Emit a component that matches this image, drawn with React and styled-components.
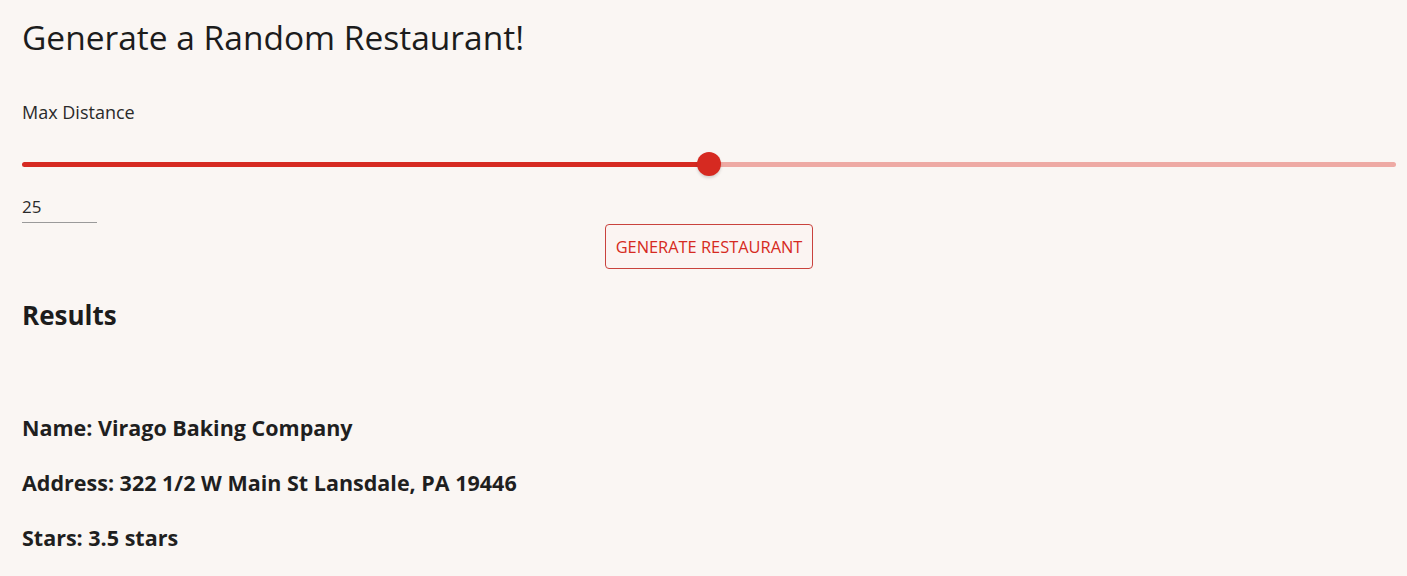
import React, { useState } from "react";
import styled, { createGlobalStyle } from "styled-components";

const GlobalStyle = createGlobalStyle`
  html, body {
    margin: 0;
    padding: 0;
    background: #faf6f3;
  }
  body {
    font-family: "Open Sans", "Noto Sans", Arial, sans-serif;
    color: #222222;
  }
`;

const RED = "#d62a21";
const RED_LIGHT = "#eeaaa4";

const App = () => {
  const [distance, setDistance] = useState(25);
  const max = 50;
  const pct = (distance / max) * 100;

  return (
    <>
      <GlobalStyle />
      <Page>
        <Title>Generate a Random Restaurant!</Title>

        <Label htmlFor="distance">Max Distance</Label>
        <SliderRow>
          <Range
            id="distance"
            type="range"
            min={0}
            max={max}
            value={distance}
            onChange={(e) => setDistance(Number(e.target.value))}
            style={{
              background: `linear-gradient(to right, ${RED} ${pct}%, ${RED_LIGHT} ${pct}%)`,
            }}
          />
        </SliderRow>

        <ValueInput
          type="text"
          value={distance}
          onChange={(e) => setDistance(Number(e.target.value) || 0)}
        />

        <ButtonRow>
          <GenerateButton>GENERATE RESTAURANT</GenerateButton>
        </ButtonRow>

        <ResultsHeading>Results</ResultsHeading>

        <ResultList>
          <ResultLine>Name: Virago Baking Company</ResultLine>
          <ResultLine>Address: 322 1/2 W Main St Lansdale, PA 19446</ResultLine>
          <ResultLine>Stars: 3.5 stars</ResultLine>
        </ResultList>
      </Page>
    </>
  );
};

export default App;

const Page = styled.div`
  padding: 13px 11px 20px 22px;
  display: flex;
  flex-direction: column;
`;

const Title = styled.h1`
  margin: 0;
  font-size: 33.5px;
  font-weight: 400;
  line-height: 48px;
  color: #1c1c1c;
`;

const Label = styled.label`
  margin-top: 39px;
  font-size: 18px;
  line-height: 24px;
  color: #2a2a2a;
`;

const SliderRow = styled.div`
  height: 30px;
  margin-top: 25px;
  display: flex;
  align-items: center;
`;

const Range = styled.input`
  -webkit-appearance: none;
  appearance: none;
  width: 100%;
  height: 5px;
  margin: 0;
  border-radius: 3px;
  outline: none;

  &::-webkit-slider-thumb {
    -webkit-appearance: none;
    appearance: none;
    width: 24px;
    height: 24px;
    border-radius: 50%;
    background: ${RED};
    border: none;
    box-shadow: 0 2px 3px rgba(0, 0, 0, 0.15);
    cursor: pointer;
  }
`;

const ValueInput = styled.input`
  margin-top: 16px;
  width: 75px;
  padding: 2px 0 5px;
  border: none;
  border-bottom: 1px solid #9a9a9a;
  background: transparent;
  font-family: inherit;
  font-size: 17px;
  line-height: 20px;
  color: #2a2a2a;
  outline: none;
`;

const ButtonRow = styled.div`
  display: flex;
  justify-content: center;
  margin-top: 1px;
`;

const GenerateButton = styled.button`
  height: 45px;
  padding: 0 10px;
  border: 1px solid #c9423d;
  border-radius: 4px;
  background: #fbf4f2;
  color: ${RED};
  font-family: inherit;
  font-size: 16.4px;
  cursor: pointer;
`;

const ResultsHeading = styled.h2`
  margin: 28px 0 0;
  font-size: 26px;
  font-weight: 700;
  line-height: 36px;
  color: #1c1c1c;
`;

const ResultList = styled.div`
  margin-top: 80px;
  display: flex;
  flex-direction: column;
  gap: 26px;
`;

const ResultLine = styled.p`
  margin: 0;
  font-size: 21.5px;
  font-weight: 700;
  line-height: 29px;
  color: #1f1f1f;
`;
